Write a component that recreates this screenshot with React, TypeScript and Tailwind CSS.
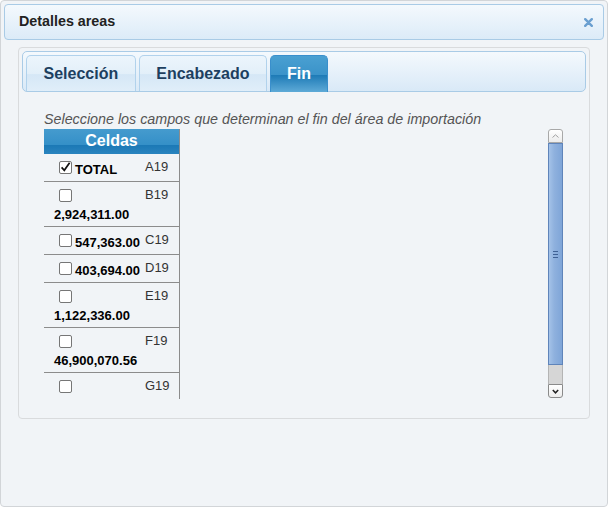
import React from 'react';

type Row = { value: string; cell: string; checked?: boolean };

const rows: Row[] = [
    { value: 'TOTAL', cell: 'A19', checked: true },
    { value: '2,924,311.00', cell: 'B19' },
    { value: '547,363.00', cell: 'C19' },
    { value: '403,694.00', cell: 'D19' },
    { value: '1,122,336.00', cell: 'E19' },
    { value: '46,900,070.56', cell: 'F19' },
    { value: '', cell: 'G19' },
];

const tabs = ['Selección', 'Encabezado', 'Fin'];

function Check({ checked }: { checked?: boolean }) {
    // overflow-hidden => baseline sits on the bottom edge, like a native checkbox
    return (
        <span className="inline-block overflow-hidden w-[13px] h-[13px] mt-[3px] ml-[5px] mr-[3px] border border-[#767676] rounded-[2px] bg-white align-baseline">
            {checked && (
                <svg viewBox="0 0 11 11" className="block w-[11px] h-[11px]">
                    <path d="M1.6 5.4 L4.3 8.3 L9.6 0.8" fill="none" stroke="#111" strokeWidth="1.7" />
                </svg>
            )}
        </span>
    );
}

function Scrollbar() {
    return (
        <div className="w-[15px] shrink-0 flex flex-col">
            <div className="h-[14px] border border-[#a8a8a8] rounded-t-[3px] bg-[linear-gradient(#ffffff,#ececec)] flex items-center justify-center">
                <svg viewBox="0 0 7 4" className="w-[7px] h-[4px]">
                    <path d="M0.5 3.5 L3.5 0.8 L6.5 3.5" fill="none" stroke="#a0a0a0" strokeWidth="1" />
                </svg>
            </div>
            <div className="h-[222px] border border-[#5f84ba] bg-[linear-gradient(to_right,#a4c2e8,#8fb1de_40%,#7fa5d8)] flex flex-col items-center justify-center gap-[2px]">
                <div className="w-[5px] h-px bg-[#3f6194]" />
                <div className="w-[5px] h-px bg-[#3f6194]" />
                <div className="w-[5px] h-px bg-[#3f6194]" />
            </div>
            <div className="h-[19px] border-x border-[#b4b4b4] bg-[#d6d6d6]" />
            <div className="h-[14px] border border-[#8a8a8a] rounded-b-[3px] bg-[linear-gradient(#ffffff,#ededed)] flex items-center justify-center">
                <svg viewBox="0 0 7 5" className="w-[7px] h-[5px]">
                    <path d="M0.8 1 L3.5 3.8 L6.2 1" fill="none" stroke="#222" strokeWidth="1.5" />
                </svg>
            </div>
        </div>
    );
}

export default function App() {
    return (
        <div className="w-[608px] h-[507px] p-[3px] border border-[#d2d5d8] rounded-[4px] bg-[#f1f4f7] font-['Liberation_Sans',Arial,sans-serif]">
            <div className="h-[36px] flex items-center justify-between pl-[14px] pr-[10px] border border-[#a9cbe6] rounded-[4px] bg-[linear-gradient(#f4f9fd,#dcebf8)]">
                <span className="text-[14.3px] font-bold text-[#222]">Detalles areas</span>
                <svg viewBox="0 0 9 9" className="w-[9px] h-[9px]">
                    <path d="M1.2 1.2 L7.8 7.8 M7.8 1.2 L1.2 7.8" stroke="#6a9fd0" strokeWidth="2.4" strokeLinecap="round" />
                </svg>
            </div>

            <div className="mt-[7px] mx-[14px] p-[3px] border border-[#d9dbdd] rounded-[4px] bg-[#f1f4f7]">
                <div className="h-[41px] flex gap-[3px] px-[3px] pt-[3px] border border-[#a9cbe6] rounded-[5px] bg-[linear-gradient(#f4f9fd,#d9e9f7)]">
                    {tabs.map((t) =>
                        t === 'Fin' ? (
                            <div
                                key={t}
                                className="h-[37px] px-4 border border-b-0 border-[#3a8fcc] rounded-t-[5px] bg-[linear-gradient(#4aa0d2,#3b93c9_52%,#1d7ab6_53%,#5eaad7)] text-[16px] leading-[35px] font-bold text-white"
                            >
                                {t}
                            </div>
                        ) : (
                            <div
                                key={t}
                                className="h-[36px] px-[16.5px] border border-b-0 border-[#b1d2ec] rounded-t-[5px] bg-[linear-gradient(#ecf5fc,#e2eff9_52%,#d5e7f6_53%,#e0eef9)] text-[16px] leading-[35px] font-bold text-[#1d3f5f]"
                            >
                                {t}
                            </div>
                        ),
                    )}
                </div>

                <div className="pl-[22px] pr-[23px] pt-[18px] pb-[16px]">
                    <p className="text-[14.3px] leading-[19px] italic text-[#555]">
                        Seleccione los campos que determinan el fin del área de importación
                    </p>
                    <div className="h-[270px] flex">
                        <div className="flex-1 overflow-hidden">
                            <div className="w-[136px] min-h-full border-r border-[#8c8c8c]">
                                <div className="h-[25px] text-center text-[16px] leading-[24px] font-bold text-white bg-[linear-gradient(#459bce,#3590c8_62%,#1c79b6_66%,#2a84bf)]">
                                    Celdas
                                </div>
                                {rows.map((r) => (
                                    <div key={r.cell} className="flex border-b border-[#8c8c8c]">
                                        <div className="w-[100px] shrink-0 pl-[10px] pt-1 pb-[3px] text-[13px] leading-[17px] font-bold text-black">
                                            <Check checked={r.checked} />
                                            {r.value}
                                        </div>
                                        <div className="flex-1 pl-px pt-1 text-[13px] leading-[17px] text-[#333]">{r.cell}</div>
                                    </div>
                                ))}
                            </div>
                        </div>
                        <Scrollbar />
                    </div>
                </div>
            </div>
        </div>
    );
}
